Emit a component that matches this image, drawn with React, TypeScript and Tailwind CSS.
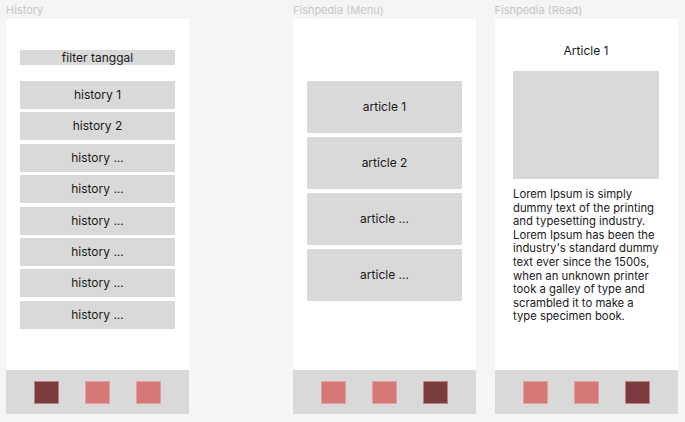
const font = { fontFamily: "Inter, 'Noto Sans', sans-serif" };

const NavBar = ({ active }: { active: number }) => (
  <div className="h-[44px] bg-[#d9d9d9] flex items-center justify-center gap-[26px]">
    {[0, 1, 2].map((i) => (
      <div
        key={i}
        className={
          i === active
            ? "w-[25px] h-[23px] bg-[#7b3c3d] border border-[#b98486]"
            : "w-[25px] h-[23px] bg-[#d67875] border border-[#e0a3a1]"
        }
      />
    ))}
  </div>
);

const Frame = ({ label, children, active, className }: { label: string; children: React.ReactNode; active: number; className?: string }) => (
  <div className={"flex flex-col " + (className ?? "")}>
    <div className="h-[16px] text-[11px] leading-[14px] text-[#c6c6c6]">{label}</div>
    <div className="w-[183px] h-[395px] bg-white flex flex-col">
      <div className="flex-1">{children}</div>
      <NavBar active={active} />
    </div>
  </div>
);

export default function App() {
  const history = ["history 1", "history 2", "history ...", "history ...", "history ...", "history ...", "history ...", "history ..."];
  const articles = ["article 1", "article 2", "article ...", "article ..."];

  return (
    <div className="w-[685px] h-[422px] bg-[#f5f5f5] flex pt-[3px] pl-[6px] text-[#1a1a1a]" style={font}>
      <Frame label="History" active={0}>
        <div className="px-[14px] pt-[31px]">
          <div className="h-[15px] bg-[#d9d9d9] flex items-center justify-center text-[12px]">filter tanggal</div>
          <div className="mt-[16px] flex flex-col gap-[3.4px]">
            {history.map((h, i) => (
              <div key={i} className="h-[28px] bg-[#d9d9d9] flex items-center justify-center text-[12px]">
                {h}
              </div>
            ))}
          </div>
        </div>
      </Frame>

      <Frame label="Fishpedia (Menu)" active={2} className="ml-[104px]">
        <div className="px-[14px] pt-[62px] flex flex-col gap-[4px]">
          {articles.map((a, i) => (
            <div key={i} className="h-[52px] bg-[#d9d9d9] flex items-center justify-center text-[12px]">
              {a}
            </div>
          ))}
        </div>
      </Frame>

      <Frame label="Fishpedia (Read)" active={2} className="ml-[18.5px]">
        <div className="pt-[24px] flex flex-col items-center">
          <div className="text-[12px] leading-[16px]">Article 1</div>
          <div className="mt-[12px] w-[146px] h-[108px] bg-[#d9d9d9]" />
          <p className="mt-[9px] w-[146px] text-[11.3px] leading-[13.6px]">
            Lorem Ipsum is simply dummy text of the printing and typesetting industry. Lorem Ipsum has been the industry's standard dummy text ever since the 1500s, when an unknown printer took a galley of type and scrambled it to make a type specimen book.
          </p>
        </div>
      </Frame>
    </div>
  );
}
